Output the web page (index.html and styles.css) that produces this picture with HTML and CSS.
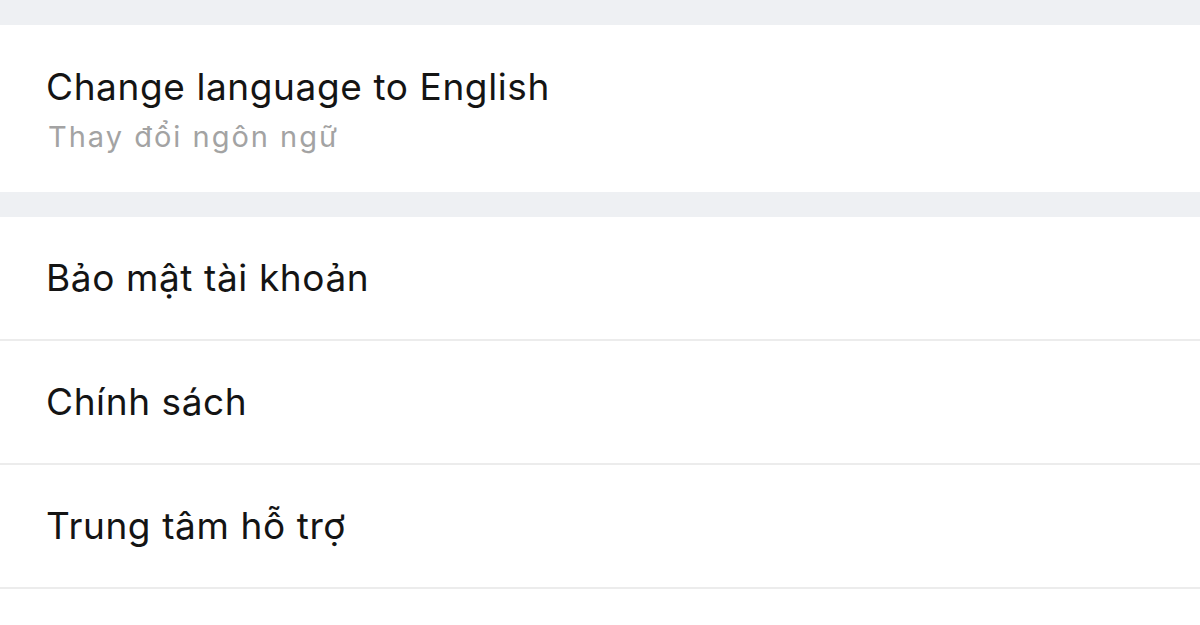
FILE: index.html
```html
<!DOCTYPE html>
<html lang="vi">
<head>
<meta charset="utf-8">
<link rel="stylesheet" href="styles.css">
</head>
<body>
<div class="page">
  <div class="gap"></div>
  <section class="group">
    <div class="item item-lang">
      <div class="title">Change language to English</div>
      <div class="subtitle">Thay đổi ngôn ngữ</div>
    </div>
  </section>
  <div class="gap"></div>
  <section class="group">
    <div class="item"><div class="title">Bảo mật tài khoản</div></div>
    <div class="item"><div class="title">Chính sách</div></div>
    <div class="item"><div class="title">Trung tâm hỗ trợ</div></div>
    <div class="item item-last"></div>
  </section>
</div>
</body>
</html>
```
FILE: styles.css
```css
* { box-sizing: border-box; }
html, body { margin: 0; padding: 0; }
body {
  background: #ffffff;
  font-family: Inter, "Noto Sans", sans-serif;
  color: #141414;
  width: 1200px;
  height: 625px;
  overflow: hidden;
}
.page { display: flex; flex-direction: column; }
.gap { height: 25px; background: #eef0f3; flex-shrink: 0; }
.group { background: #fff; display: flex; flex-direction: column; }
.item {
  height: 124px;
  padding: 0 46px;
  display: flex;
  flex-direction: column;
  justify-content: center;
  border-bottom: 2px solid #ececec;
  flex-shrink: 0;
}
.item-lang {
  height: 167px;
  border-bottom: none;
  justify-content: flex-start;
  padding-top: 40px;
}
.item-last { height: 40px; border-bottom: none; }
.title { font-size: 37px; line-height: 44px; letter-spacing: 0.6px; }
.subtitle {
  font-size: 29px;
  line-height: 38px;
  color: #a3a3a3;
  letter-spacing: 2px;
  margin-top: 9px;
  margin-left: 2px;
}
```
